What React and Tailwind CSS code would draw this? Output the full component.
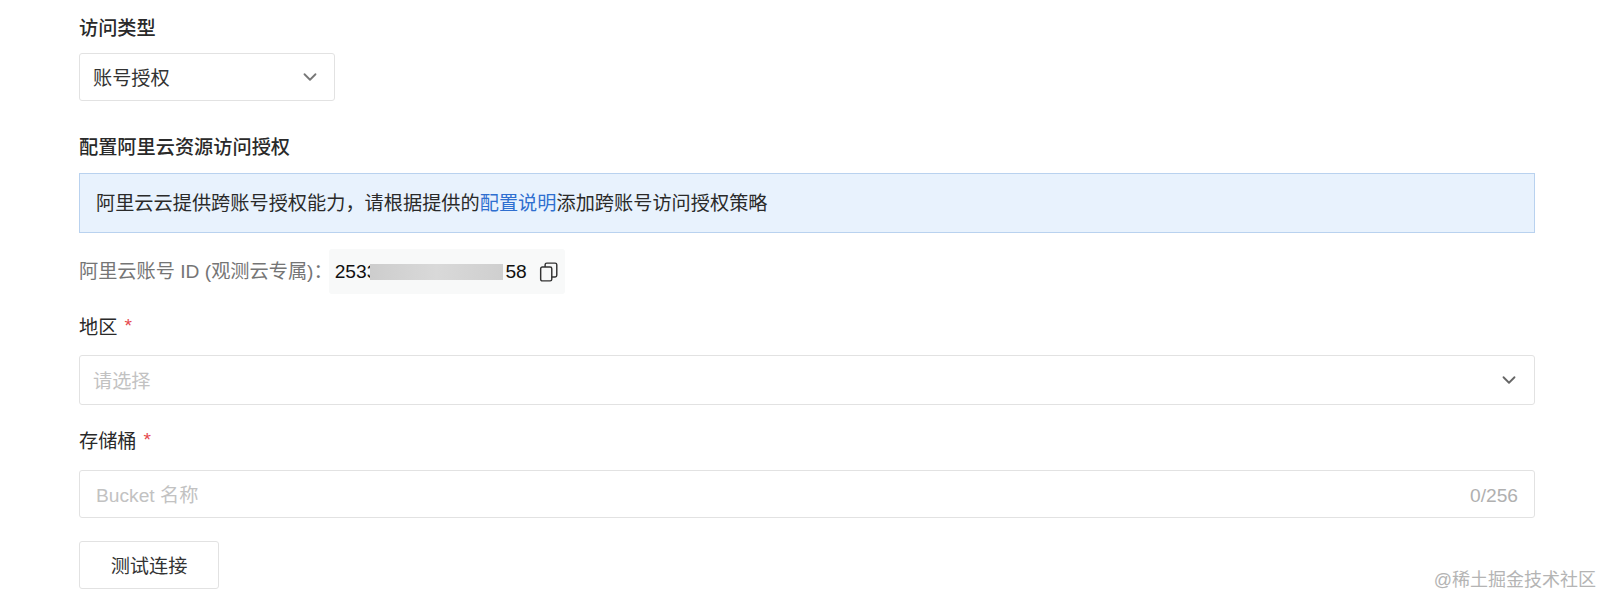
import React from 'react';
import { ChevronDown } from 'lucide-react';

function Star() {
  return <span className="-mt-[2px] ml-[7px] text-[#e5484d]">*</span>;
}

function CopyIcon() {
  return (
    <svg width="20" height="20" viewBox="0 0 18 18" fill="none" stroke="#333" strokeWidth="1.3" strokeLinejoin="round">
      <rect x="1.5" y="4.5" width="10" height="12.5" rx="1.5" />
      <path d="M5.5 4.5V2.5a1.5 1.5 0 0 1 1.5-1.5h7.5a1.5 1.5 0 0 1 1.5 1.5V12a1.5 1.5 0 0 1-1.5 1.5h-3" />
    </svg>
  );
}

export default function App() {
  return (
    <div className="relative h-[596px] w-[1601px] overflow-hidden bg-white pl-[79px] pr-[66px] pt-[17px] font-['Liberation_Sans','Noto_Sans_CJK_SC',sans-serif] text-[19.2px] leading-[24px] text-[#2a2a2a] antialiased">
      <div className="font-medium">访问类型</div>

      <div className="mt-[12px] flex h-[48px] w-[256px] items-center justify-between rounded-[3px] border border-[#e2e2e2] pl-[13px] pr-[13px] text-[#333]">
        <span className="pt-[3px]">账号授权</span>
        <ChevronDown size={22} strokeWidth={2} className="text-[#777]" />
      </div>

      <div className="mt-[35px] font-medium">配置阿里云资源访问授权</div>

      <div className="mt-[13px] flex h-[60px] items-center border border-[#b9d2ef] bg-[#e8f2fd] pl-[16px] pt-[2px]">
        阿里云云提供跨账号授权能力，请根据提供的
        <span className="text-[#2f6fd0]">配置说明</span>
        添加跨账号访问授权策略
      </div>

      <div className="mt-[16px] flex items-center">
        <span className="text-[#757575]">阿里云账号 ID (观测云专属)：</span>
        <div className="relative -ml-[4px] flex h-[45px] w-[236px] items-center rounded-[3px] bg-[#f8f9f9] pl-[6px]">
          <span className="text-[#111]">2533</span>
          <span className="ml-[128px] text-[#111]">58</span>
          <span className="ml-[12px]">
            <CopyIcon />
          </span>
          <div className="absolute left-[41px] top-[15px] h-[16px] w-[133px] bg-gradient-to-r from-[#cdcdcd] via-[#d9d9d9] to-[#cfcfcf] blur-[0.6px]" />
        </div>
      </div>

      <div className="mt-[22px] flex">
        <span>地区</span>
        <Star />
      </div>

      <div className="mt-[15px] flex h-[50px] items-center justify-between rounded-[3px] border border-[#e2e2e2] pl-[13px] pr-[14px] text-[#c2c2c2]">
        <span className="pt-[3px]">请选择</span>
        <ChevronDown size={22} strokeWidth={2} className="text-[#666]" />
      </div>

      <div className="mt-[25px] flex">
        <span>存储桶</span>
        <Star />
      </div>

      <div className="mt-[16px] flex h-[48px] items-center justify-between rounded-[3px] border border-[#e2e2e2] pl-[16px] pr-[16px] pt-[3px] text-[#c2c2c2]">
        <span>Bucket 名称</span>
        <span className="text-[#b0b0b0]">0/256</span>
      </div>

      <div className="mt-[23px] flex h-[48px] w-[140px] items-center justify-center rounded-[3px] border border-[#e2e2e2] pt-[3px] text-[#333]">
        测试连接
      </div>

      <div className="absolute bottom-[4px] right-[5px] text-[18px] leading-[24px] text-[#b4b4b4]">@稀土掘金技术社区</div>
    </div>
  );
}
